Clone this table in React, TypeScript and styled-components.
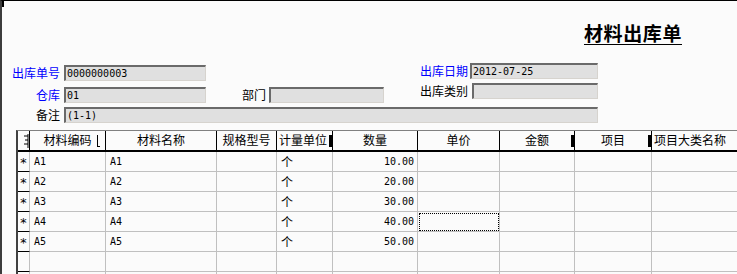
import React from 'react';
import styled, { createGlobalStyle, css } from 'styled-components';

type Align = 'left' | 'center' | 'right';
type Mark = 'thin' | 'block' | 'stub';

interface Column {
  key: string;
  title: string;
  width: number;
  align?: Align;
  mark?: Mark;
}

const columns: Column[] = [
  { key: 'flag', title: '', width: 12, mark: 'stub' },
  { key: 'code', title: '材料编码', width: 76, mark: 'thin' },
  { key: 'name', title: '材料名称', width: 111 },
  { key: 'spec', title: '规格型号', width: 60 },
  { key: 'unit', title: '计量单位', width: 56, align: 'left', mark: 'block' },
  { key: 'qty', title: '数量', width: 85 },
  { key: 'price', title: '单价', width: 82 },
  { key: 'amount', title: '金额', width: 75, mark: 'block' },
  { key: 'project', title: '项目', width: 77, mark: 'block' },
  { key: 'category', title: '项目大类名称', width: 120, align: 'left' },
];

const rows = [
  { code: 'A1', name: 'A1', unit: '个', qty: '10.00' },
  { code: 'A2', name: 'A2', unit: '个', qty: '20.00' },
  { code: 'A3', name: 'A3', unit: '个', qty: '30.00' },
  { code: 'A4', name: 'A4', unit: '个', qty: '40.00' },
  { code: 'A5', name: 'A5', unit: '个', qty: '50.00' },
];

const focused = { row: 3, key: 'price' };

const GlobalStyle = createGlobalStyle`
  html, body {
    margin: 0;
    padding: 0;
    background: #fbfbfb;
  }
  body {
    font-family: "Noto Sans CJK SC", sans-serif;
    font-size: 12px;
    color: #000;
    overflow: hidden;
  }
`;

const Frame = styled.div`
  position: relative;
  width: 737px;
  height: 274px;
  box-sizing: border-box;
  border-top: 1px solid #000;
  border-left: 2px solid #3c3c3c;
  background: #fbfbfb;
  overflow: hidden;

  &::before {
    content: '';
    position: absolute;
    left: 0;
    top: 0;
    width: 2px;
    height: 6px;
    background: #000;
  }
`;

const TitleRow = styled.div`
  height: 62px;
  box-sizing: border-box;
  padding: 22px 55px 0 0;
  display: flex;
  justify-content: flex-end;
  align-items: flex-start;
`;

const Title = styled.h1`
  margin: 0;
  font-size: 19px;
  line-height: 20px;
  font-weight: 700;
  letter-spacing: 0.6px;
  text-decoration: underline;
  text-decoration-thickness: 1px;
  text-underline-offset: 3px;
`;

const Fields = styled.div`
  display: flex;
  align-items: flex-start;
  height: 44px;
`;

const Column = styled.div<{ $gap: number; $top: number; $lead?: number }>`
  display: flex;
  flex-direction: column;
  gap: ${(p) => p.$gap}px;
  padding-top: ${(p) => p.$top}px;
  margin-left: ${(p) => p.$lead ?? 0}px;
`;

const FieldRow = styled.div`
  display: flex;
  align-items: center;
  height: 16px;
`;

const Label = styled.label<{ $w: number; $accent?: boolean; $pad?: number }>`
  width: ${(p) => p.$w}px;
  box-sizing: border-box;
  padding-right: ${(p) => p.$pad ?? 4}px;
  text-align: right;
  white-space: nowrap;
  line-height: 16px;
  color: ${(p) => (p.$accent ? '#0000ff' : '#000')};
`;

const Field = styled.div<{ $w: number }>`
  width: ${(p) => p.$w}px;
  height: 16px;
  box-sizing: border-box;
  background: #e0e0e0;
  border-top: 2px solid #6a6a6a;
  border-left: 2px solid #6a6a6a;
  border-right: 1px solid #d6d3ce;
  border-bottom: 1px solid #d6d3ce;
  padding-left: 1px;
  font-family: "DejaVu Sans Mono", monospace;
  font-size: 10px;
  line-height: 13px;
  white-space: nowrap;
  overflow: hidden;
`;

const Remarks = styled(FieldRow)``;

const Grid = styled.div`
  margin: 7px 0 0 14px;
  display: grid;
  grid-template-columns: ${columns.map((c) => `${c.width}px`).join(' ')};
  border-top: 1px solid #808080;
  border-left: 2px solid #404040;
  width: max-content;
`;

const HeadCell = styled.div<{ $align: Align; $mark?: Mark }>`
  position: relative;
  height: 21px;
  box-sizing: border-box;
  border-right: 1px solid #000;
  border-bottom: 2px solid #000;
  padding-left: ${(p) => (p.$align === 'left' ? 2 : 0)}px;
  text-align: ${(p) => p.$align};
  line-height: 18px;
  white-space: nowrap;
  overflow: hidden;

  ${(p) =>
    p.$mark === 'block' &&
    css`
      &::after {
        content: '';
        position: absolute;
        right: 0;
        top: 4px;
        width: 3px;
        height: 12px;
        background: #000;
      }
    `}

  ${(p) =>
    p.$mark === 'thin' &&
    css`
      &::after {
        content: '';
        position: absolute;
        right: 5px;
        top: 4px;
        width: 2px;
        height: 11px;
        border-left: 1px solid #000;
        border-bottom: 1px solid #000;
      }
    `}
`;

const Stub = styled.svg`
  position: absolute;
  right: 0;
  top: 3px;
`;

const Cell = styled.div<{ $numeric?: boolean; $focus?: boolean; $flag?: boolean }>`
  height: 20px;
  box-sizing: border-box;
  border-right: 1px solid #c0c0c0;
  border-bottom: 1px solid ${(p) => (p.$flag ? '#000' : '#c0c0c0')};
  padding: 0 3px 0 4px;
  line-height: 19px;
  white-space: nowrap;
  overflow: hidden;
  text-align: ${(p) => (p.$numeric ? 'right' : p.$flag ? 'center' : 'left')};
  font-family: "DejaVu Sans Mono", "Noto Sans CJK SC", monospace;
  font-size: 10px;

  ${(p) =>
    p.$flag &&
    css`
      padding: 3px 0 0;
      font-size: 13px;
      line-height: 16px;
    `}

  ${(p) =>
    p.$focus &&
    css`
      outline: 1px dotted #000;
      outline-offset: -2px;
    `}
`;

const Glyph = styled.span`
  font-family: "Noto Sans CJK SC", sans-serif;
  font-size: 12px;
`;

function HeaderCell({ col }: { col: Column }) {
  return (
    <HeadCell $align={col.align ?? 'center'} $mark={col.mark}>
      {col.title}
      {col.mark === 'stub' && (
        <Stub width="5" height="14" viewBox="0 0 5 14">
          <path d="M4 0V14M0 2H4M1 6H4M0 10H4" stroke="#000" strokeWidth="1" fill="none" />
        </Stub>
      )}
    </HeadCell>
  );
}

export default function App() {
  const body = [...rows, null, null];
  return (
    <>
      <GlobalStyle />
      <Frame>
        <TitleRow>
          <Title>材料出库单</Title>
        </TitleRow>

        <Fields>
          <Column $gap={6} $top={2}>
            <FieldRow>
              <Label $w={62} $accent>出库单号</Label>
              <Field $w={142}>0000000003</Field>
            </FieldRow>
            <FieldRow>
              <Label $w={62} $accent>仓库</Label>
              <Field $w={142}>01</Field>
              <Label $w={63} $pad={3}>部门</Label>
              <Field $w={115} />
            </FieldRow>
          </Column>
          <Column $gap={4} $top={0} $lead={36}>
            <FieldRow>
              <Label $w={50} $accent $pad={3}>出库日期</Label>
              <Field $w={128}>2012-07-25</Field>
            </FieldRow>
            <FieldRow>
              <Label $w={52} $pad={4}>出库类别</Label>
              <Field $w={126} />
            </FieldRow>
          </Column>
        </Fields>

        <Remarks>
          <Label $w={62}>备注</Label>
          <Field $w={534}>(1-1)</Field>
        </Remarks>

        <Grid>
          {columns.map((col) => (
            <HeaderCell key={col.key} col={col} />
          ))}
          {body.map((row, i) =>
            columns.map((col) => {
              if (col.key === 'flag') {
                return (
                  <Cell key={`${i}-flag`} $flag>
                    {row ? '*' : ''}
                  </Cell>
                );
              }
              const value = row ? (row as Record<string, string>)[col.key] ?? '' : '';
              const isCjk = /[\u4e00-\u9fff]/.test(value);
              return (
                <Cell
                  key={`${i}-${col.key}`}
                  $numeric={col.key === 'qty'}
                  $focus={focused.row === i && focused.key === col.key}
                >
                  {isCjk ? <Glyph>{value}</Glyph> : value}
                </Cell>
              );
            })
          )}
        </Grid>
      </Frame>
    </>
  );
}
